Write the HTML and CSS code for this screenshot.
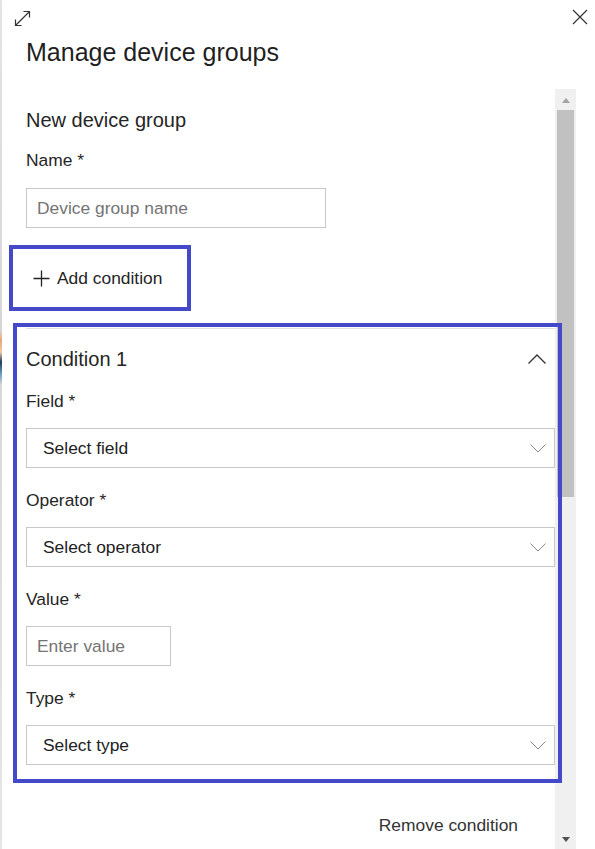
FILE: index.html
```html
<!DOCTYPE html>
<html lang="en">
<head>
<meta charset="utf-8">
<title>Manage device groups</title>
<link rel="stylesheet" href="styles.css">
</head>
<body>
<div class="page">
  <div class="edge"></div>
  <div class="panel">
    <div class="topbar">
      <svg class="icon-expand" width="17" height="17" viewBox="0 0 17 17" aria-hidden="true">
        <path d="M1.5 15.5 L15.5 1.5 M9.5 1.5 H15.5 V7.5 M1.5 9.5 V15.5 H7.5" fill="none" stroke="#333" stroke-width="1.2"/>
      </svg>
      <svg class="icon-close" width="16" height="16" viewBox="0 0 16 16" aria-hidden="true">
        <path d="M1 1 L15 15 M15 1 L1 15" fill="none" stroke="#333" stroke-width="1.2"/>
      </svg>
    </div>
    <h1 class="title">Manage device groups</h1>
    <div class="body">
      <div class="content">
        <h2 class="section-title">New device group</h2>
        <label class="label label-name" for="groupName">Name *</label>
        <input class="text-input name-input" id="groupName" type="text" placeholder="Device group name">

        <div class="callout add-callout">
          <button class="add-btn" type="button">
            <svg class="icon-plus" width="17" height="17" viewBox="0 0 17 17" aria-hidden="true">
              <path d="M8.5 0.5 V16.5 M0.5 8.5 H16.5" fill="none" stroke="#222" stroke-width="1.3"/>
            </svg>
            <span>Add condition</span>
          </button>
        </div>

        <div class="callout cond-callout">
          <section class="condition">
            <div class="cond-header">
              <h3 class="cond-title">Condition 1</h3>
              <svg class="icon-chevron-up" width="18" height="10" viewBox="0 0 18 10" aria-hidden="true">
                <path d="M0.5 9.5 L9 1 L17.5 9.5" fill="none" stroke="#333" stroke-width="1.3"/>
              </svg>
            </div>

            <div class="field field-first">
              <div class="label">Field *</div>
              <div class="select"><span>Select field</span>
                <svg class="icon-chevron-down" width="16" height="9" viewBox="0 0 16 9" aria-hidden="true"><path d="M0.5 0.5 L8 8 L15.5 0.5" fill="none" stroke="#8a8a8a" stroke-width="1"/></svg>
              </div>
            </div>

            <div class="field">
              <div class="label">Operator *</div>
              <div class="select"><span>Select operator</span>
                <svg class="icon-chevron-down" width="16" height="9" viewBox="0 0 16 9" aria-hidden="true"><path d="M0.5 0.5 L8 8 L15.5 0.5" fill="none" stroke="#8a8a8a" stroke-width="1"/></svg>
              </div>
            </div>

            <div class="field">
              <label class="label" for="condValue">Value *</label>
              <input class="text-input value-input" id="condValue" type="text" placeholder="Enter value">
            </div>

            <div class="field">
              <div class="label">Type *</div>
              <div class="select"><span>Select type</span>
                <svg class="icon-chevron-down" width="16" height="9" viewBox="0 0 16 9" aria-hidden="true"><path d="M0.5 0.5 L8 8 L15.5 0.5" fill="none" stroke="#8a8a8a" stroke-width="1"/></svg>
              </div>
            </div>
          </section>
        </div>

        <div class="remove-row">
          <button class="remove-btn" type="button">Remove condition</button>
        </div>
      </div>

      <div class="scrollbar" aria-hidden="true">
        <div class="sb-btn sb-up"><span class="tri-up"></span></div>
        <div class="sb-thumb"></div>
        <div class="sb-track"></div>
        <div class="sb-btn sb-down"><span class="tri-down"></span></div>
      </div>
    </div>
  </div>
</div>
</body>
</html>
```

FILE: styles.css
```css
* {
  box-sizing: border-box;
}

html,
body {
  margin: 0;
  padding: 0;
  background: #ffffff;
}

body {
  font-family: "Liberation Sans", Arial, sans-serif;
  color: #252525;
}

.page {
  display: flex;
  height: 849px;
  overflow: hidden;
}

.edge {
  width: 2px;
  flex: none;
  background: linear-gradient(
    to bottom,
    #e4e4e4 0,
    #d6d6d6 330px,
    #e9a77a 340px,
    #f2c9a8 352px,
    #1d3f5c 362px,
    #5a90b8 372px,
    #d8d8d8 385px,
    #e6e6e6 849px
  );
}

.panel {
  flex: 1;
  min-width: 0;
  display: flex;
  flex-direction: column;
}

/* top icons */
.topbar {
  height: 37px;
  flex: none;
  display: flex;
  justify-content: space-between;
  align-items: flex-start;
  padding: 9px 7px 0 12px;
}

.icon-expand {
  margin-top: 1px;
  display: block;
}

.icon-close {
  display: block;
  width: 16px;
  height: 16px;
}

.title {
  margin: 0 0 22px;
  padding-left: 24px;
  font-size: 25px;
  line-height: 30px;
  height: 30px;
  font-weight: 400;
  color: #1f1f1f;
}

/* scrollable body */
.body {
  flex: 1;
  min-height: 0;
  display: flex;
  padding-right: 19px;
}

.content {
  flex: 1;
  min-width: 0;
  padding: 19px 0 0 24px;
}

.section-title {
  margin: 0 0 18px;
  font-size: 20px;
  line-height: 24px;
  font-weight: 400;
  color: #252525;
}

.label {
  display: block;
  font-size: 17.4px;
  line-height: 20px;
  margin-bottom: 17px;
  color: #252525;
}

.label-name {
  margin-bottom: 18px;
}

.text-input {
  display: block;
  height: 40px;
  margin: 0;
  border: 1px solid #c8c8c8;
  border-radius: 0;
  padding: 0 10px;
  font-family: inherit;
  font-size: 17.4px;
  color: #252525;
  background: #ffffff;
  outline: none;
}

.text-input::placeholder {
  color: #747474;
  opacity: 1;
}

.name-input {
  width: 300px;
}

.value-input {
  width: 145px;
}

/* annotation callouts */
.callout {
  border: 4px solid #4349c9;
}

.add-callout {
  margin: 17px 0 0 -17px;
  width: 182px;
  height: 66px;
}

.add-btn {
  display: flex;
  align-items: center;
  gap: 7px;
  width: 100%;
  height: 100%;
  margin: 0;
  padding: 0 0 0 20px;
  border: 0;
  background: none;
  font-family: inherit;
  font-size: 17.4px;
  line-height: 20px;
  color: #252525;
  cursor: pointer;
}

.icon-plus {
  display: block;
  flex: none;
}

.cond-callout {
  position: relative;
  margin: 12px 0 0 -13px;
  width: 549px;
  padding: 1px 3px 14px 9px;
}

.condition {
  border-top: 1px solid #e1e1e1;
}

.cond-header {
  margin-top: 18px;
  height: 24px;
  display: flex;
  justify-content: space-between;
  align-items: center;
}

.cond-title {
  margin: 0;
  font-size: 20px;
  line-height: 24px;
  font-weight: 400;
  color: #252525;
}

.icon-chevron-up {
  display: block;
  margin-right: 9px;
}

.field {
  margin-top: 22px;
}

.field-first {
  margin-top: 20px;
}

.select {
  height: 40px;
  border: 1px solid #c8c8c8;
  display: flex;
  align-items: center;
  justify-content: space-between;
  padding: 0 8px 0 16px;
  font-size: 17.4px;
  line-height: 20px;
  color: #222222;
}

.icon-chevron-down {
  display: block;
}

.remove-row {
  margin-top: 32px;
  display: flex;
  justify-content: flex-end;
  padding-right: 37px;
}

.remove-btn {
  margin: 0;
  padding: 0;
  border: 0;
  background: none;
  font-family: inherit;
  font-size: 17.4px;
  line-height: 20px;
  color: #333333;
  cursor: pointer;
}

/* scrollbar */
.scrollbar {
  width: 21px;
  flex: none;
  background: #f0f0f0;
  display: flex;
  flex-direction: column;
}

.sb-btn {
  height: 21px;
  flex: none;
  display: flex;
  align-items: center;
  justify-content: center;
}

.sb-down {
  height: 20px;
}

.tri-up {
  width: 0;
  height: 0;
  border-left: 4.5px solid transparent;
  border-right: 4.5px solid transparent;
  border-bottom: 5px solid #a3a3a3;
  margin-top: 2px;
}

.tri-down {
  width: 0;
  height: 0;
  border-left: 4.5px solid transparent;
  border-right: 4.5px solid transparent;
  border-top: 5px solid #505050;
}

.sb-thumb {
  height: 387px;
  flex: none;
  margin: 0 2px;
  background: #c1c1c1;
}

.sb-track {
  flex: 1;
}
```
